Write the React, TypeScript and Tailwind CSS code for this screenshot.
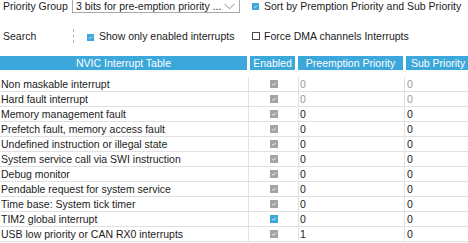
import React from "react";

const rows: { name: string; enabled: boolean; pre: string; sub: string; disabled: boolean }[] = [
  { name: "Non maskable interrupt", enabled: true, pre: "0", sub: "0", disabled: true },
  { name: "Hard fault interrupt", enabled: true, pre: "0", sub: "0", disabled: true },
  { name: "Memory management fault", enabled: true, pre: "0", sub: "0", disabled: false },
  { name: "Prefetch fault, memory access fault", enabled: true, pre: "0", sub: "0", disabled: false },
  { name: "Undefined instruction or illegal state", enabled: true, pre: "0", sub: "0", disabled: false },
  { name: "System service call via SWI instruction", enabled: true, pre: "0", sub: "0", disabled: false },
  { name: "Debug monitor", enabled: true, pre: "0", sub: "0", disabled: false },
  { name: "Pendable request for system service", enabled: true, pre: "0", sub: "0", disabled: false },
  { name: "Time base: System tick timer", enabled: true, pre: "0", sub: "0", disabled: false },
  { name: "TIM2 global interrupt", enabled: true, pre: "0", sub: "0", disabled: false },
  { name: "USB low priority or CAN RX0 interrupts", enabled: true, pre: "1", sub: "0", disabled: false },
];

function Check({ blue, size }: { blue: boolean; size: number }) {
  return (
    <span
      className={
        "inline-flex items-center justify-center shrink-0 " +
        (blue ? "bg-[#3ba7db]" : "bg-[#a3a3a3]")
      }
      style={{ width: size, height: size }}
    >
      <svg width={size - 2} height={size - 2} viewBox="0 0 8 8">
        <path d="M1.6 4.2 L3.2 5.8 L6.4 2.2" fill="none" stroke="#ffffff" strokeWidth="1.1" />
      </svg>
    </span>
  );
}

export default function App() {
  return (
    <div className="w-[468px] h-[243px] bg-white overflow-hidden font-['Liberation_Sans',Arial,sans-serif] text-[10.5px] text-[#1c1c1c] leading-none">
      {/* top row */}
      <div className="flex h-[13px] items-center">
        <div className="w-[252px] flex items-center h-full">
          <span className="ml-[3px] w-[69px]">Priority Group</span>
          <div className="w-[168px] h-[16px] self-end border border-[#a9a9a9] flex items-center pl-[3px] pr-[3px] pt-[2px]">
            <span className="flex-1">3 bits for pre-emption priority ...</span>
            <svg width="11" height="7" viewBox="0 0 11 7" className="mr-[1px]">
              <path d="M0.5 0.8 L5.5 5.8 L10.5 0.8" fill="none" stroke="#8c8c8c" strokeWidth="1" />
            </svg>
          </div>
        </div>
        <div className="flex items-center">
          <Check blue size={7} />
          <span className="ml-[5px]">Sort by Premption Priority and Sub Priority</span>
        </div>
      </div>

      {/* second row */}
      <div className="flex h-[14px] items-center mt-[16px]">
        <div className="w-[252px] flex items-center h-full">
          <span className="ml-[3px] w-[70px]">Search</span>
          <span className="h-[14px] border-l border-dashed border-[#9fb0c4]" />
          <span className="ml-[13px]">
            <Check blue size={7} />
          </span>
          <span className="ml-[5px]">Show only enabled interrupts</span>
        </div>
        <div className="flex items-center">
          <span className="w-[8px] h-[8px] border border-[#4a4a4a] bg-white shrink-0" />
          <span className="ml-[4px]">Force DMA channels Interrupts</span>
        </div>
      </div>

      {/* header */}
      <div className="flex gap-[3px] mt-[13px] h-[14px] text-white">
        <div className="w-[247px] bg-[#3ba7db] flex items-center justify-center">NVIC Interrupt Table</div>
        <div className="w-[45px] bg-[#3ba7db] flex items-center justify-center">Enabled</div>
        <div className="w-[105px] bg-[#3ba7db] flex items-center justify-center">Preemption Priority</div>
        <div className="flex-1 bg-[#3ba7db] flex items-center pl-[5px] whitespace-nowrap overflow-hidden">Sub Priority</div>
      </div>

      {/* body */}
      <div className="mt-[7px]">
        {rows.map((r, i) => (
          <div key={i} className="grid grid-cols-[248px_50px_106px_1fr] h-[15px] border-b border-[#e1e1e1]">
            <div className="flex items-center pl-[1px] whitespace-nowrap">{r.name}</div>
            <div className="flex items-center justify-center border-l border-[#e1e1e1]">
              <Check blue={r.name.startsWith("TIM2")} size={8} />
            </div>
            <div className={"flex items-center pl-[1px] border-l border-[#e1e1e1] " + (r.disabled ? "text-[#9a9a9a]" : "")}>
              {r.pre}
            </div>
            <div className={"flex items-center pl-[2px] border-l border-[#e1e1e1] " + (r.disabled ? "text-[#9a9a9a]" : "")}>
              {r.sub}
            </div>
          </div>
        ))}
      </div>
    </div>
  );
}
